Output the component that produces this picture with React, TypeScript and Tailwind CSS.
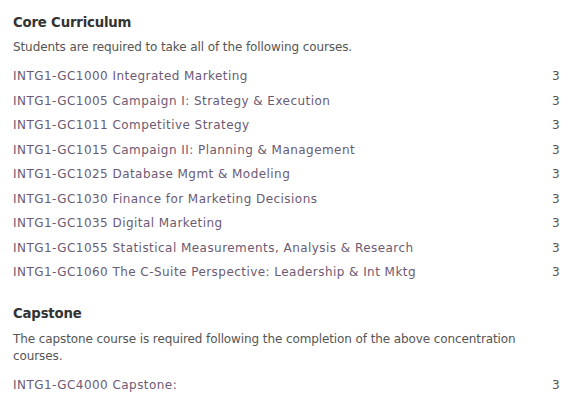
const core: [string, string][] = [
  ['INTG1-GC1000', 'Integrated Marketing'],
  ['INTG1-GC1005', 'Campaign I: Strategy & Execution'],
  ['INTG1-GC1011', 'Competitive Strategy'],
  ['INTG1-GC1015', 'Campaign II: Planning & Management'],
  ['INTG1-GC1025', 'Database Mgmt & Modeling'],
  ['INTG1-GC1030', 'Finance for Marketing Decisions'],
  ['INTG1-GC1035', 'Digital Marketing'],
  ['INTG1-GC1055', 'Statistical Measurements, Analysis & Research'],
  ['INTG1-GC1060', 'The C-Suite Perspective: Leadership & Int Mktg'],
]

function CourseRow({ code, title }: { code: string; title: string }) {
  return (
    <div className="flex h-[24.5px] items-center justify-between">
      <a className="text-[#6b5a73] tracking-[0.45px]">
        {code} {title}
      </a>
      <span className="w-[8px] text-[#555]">3</span>
    </div>
  )
}

export default function App() {
  return (
    <div className="h-[413px] w-[573px] bg-white px-[13px] pt-[13px] font-['DejaVu_Sans',sans-serif] text-[12px] text-[#555]">
      <h2 className="text-[13.3px] font-bold leading-[20px] tracking-[-0.2px] text-[#333]">Core Curriculum</h2>
      <p className="mt-[4px] leading-[20px] tracking-[-0.1px]">
        Students are required to take all of the following courses.
      </p>
      <div className="mt-[7px]">
        {core.map(([code, title]) => (
          <CourseRow key={code} code={code} title={title} />
        ))}
      </div>
      <h2 className="mt-[19px] text-[13.3px] font-bold leading-[20px] tracking-[-0.2px] text-[#333]">Capstone</h2>
      <p className="mt-[7px] leading-[17px] tracking-[-0.1px]">
        The capstone course is required following the completion of the above concentration courses.
      </p>
      <div className="mt-[8px]">
        <CourseRow code="INTG1-GC4000" title="Capstone:" />
      </div>
    </div>
  )
}
